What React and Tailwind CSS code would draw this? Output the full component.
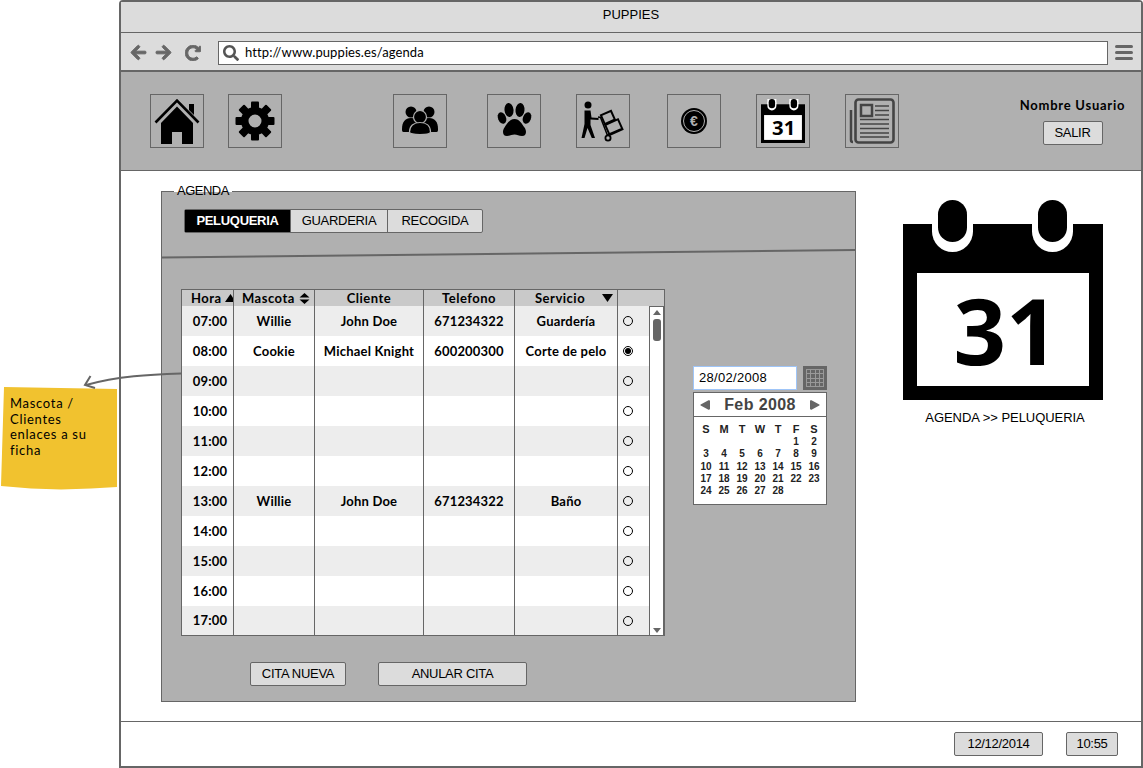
import React from "react";
import { FaArrowLeft, FaArrowRight, FaRedoAlt, FaSearch, FaCaretLeft, FaCaretRight } from "react-icons/fa";

const rows = [
  ["07:00", "Willie", "John Doe", "671234322", "Guardería"],
  ["08:00", "Cookie", "Michael Knight", "600200300", "Corte de pelo"],
  ["09:00"], ["10:00"], ["11:00"], ["12:00"],
  ["13:00", "Willie", "John Doe", "671234322", "Baño"],
  ["14:00"], ["15:00"], ["16:00"], ["17:00"],
];
const widths = ["w-[52px]", "w-[81px]", "w-[109px]", "w-[91px]", "w-[103px]"];
const days = [
  ["", "", "", "", "", "1", "2"],
  ["3", "4", "5", "6", "7", "8", "9"],
  ["10", "11", "12", "13", "14", "15", "16"],
  ["17", "18", "19", "20", "21", "22", "23"],
  ["24", "25", "26", "27", "28", "", ""],
];

function CalendarIcon({ size }) {
  return (
    <svg width={size} height={size} viewBox="0 0 200 200" className="block">
      <rect x="0" y="24" width="200" height="176" fill="#000" />
      <rect x="14" y="73" width="172" height="113" fill="#fff" />
      <rect x="29" y="0" width="41" height="52" rx="20.5" fill="#fff" />
      <rect x="129" y="0" width="41" height="52" rx="20.5" fill="#fff" />
      <rect x="29" y="0" width="41" height="24" fill="#fff" />
      <rect x="129" y="0" width="41" height="24" fill="#fff" />
      <rect x="35" y="0" width="29" height="42" rx="14.5" fill="#000" />
      <rect x="135" y="0" width="29" height="42" rx="14.5" fill="#000" />
      <text x="103" y="165" textAnchor="middle" fontFamily="'Open Sans', sans-serif" fontWeight="700" fontSize="92" fill="#000">31</text>
    </svg>
  );
}

function HouseIcon() {
  return (
    <svg width="52" height="52" viewBox="0 0 52 52" className="block">
      <path d="M38 9h5v11l-5-5z" fill="#000" />
      <path d="M4.500 27.500 26 5.500l21.500 22" fill="none" stroke="#000" strokeWidth="2.600" />
      <path d="M10 28 26 11.500 42 28v21H31V37H21v12H10z" fill="#000" />
    </svg>
  );
}

function GearIcon() {
  const angles = [0, 45, 90, 135, 180, 225, 270, 315];
  return (
    <svg width="52" height="52" viewBox="0 0 52 52" className="block">
      <circle cx="26" cy="26" r="10.250" fill="none" stroke="#000" strokeWidth="7.500" />
      {angles.map((a) => (
        <rect key={a} x="22" y="6.500" width="8" height="7" rx="1" fill="#000" transform={`rotate(${a} 26 26)`} />
      ))}
    </svg>
  );
}

function UsersIcon() {
  return (
    <svg width="52" height="52" viewBox="0 0 52 52" className="block" fill="#000" stroke="#b0b0b0" strokeWidth="0">
      <circle cx="17" cy="17" r="5.500" />
      <circle cx="35" cy="17" r="5.500" />
      <path d="M8 34c0-7 3-11 9-11s9 4 9 11v3H9.500C8 37 8 35.500 8 34z" />
      <path d="M44 34c0-7-3-11-9-11s-9 4-9 11v3h16.500c1.500 0 1.500-1.500 1.500-3z" />
      <circle cx="26" cy="22" r="6.500" stroke="#b0b0b0" strokeWidth="1.200" />
      <path d="M15.500 37c0-6 4-9.500 10.500-9.500S36.500 31 36.500 37c0 1.500-4 2.500-10.500 2.500S15.500 38.500 15.500 37z" stroke="#b0b0b0" strokeWidth="1.200" />
    </svg>
  );
}

function PawIcon() {
  return (
    <svg width="52" height="52" viewBox="0 0 52 52" className="block" fill="#000">
      <ellipse cx="14" cy="23" rx="4" ry="6" transform="rotate(-22 14 23)" />
      <ellipse cx="21" cy="15" rx="4.500" ry="7" transform="rotate(-6 21 15)" />
      <ellipse cx="32" cy="15" rx="4.500" ry="7" transform="rotate(6 32 15)" />
      <ellipse cx="39" cy="23" rx="4" ry="6" transform="rotate(22 39 23)" />
      <path d="M26.500 24c5 0 7.500 5 10 8.500 2.500 3.500 2 8.500-2.500 8.500-3 0-5-1.500-7.500-1.500S22 41 19 41c-4.500 0-5-5-2.500-8.500C19 29 21.500 24 26.500 24z" />
    </svg>
  );
}

function MoverIcon() {
  return (
    <svg width="52" height="52" viewBox="0 0 52 52" className="block">
      <circle cx="11" cy="10" r="3.500" fill="#000" />
      <path d="M7.500 15.500h6l1 7 7 .5v2l-8-.5V30l4.500 13h-3.200L10.500 33 7.500 43H4.500L7.500 29z" fill="#000" />
      <path d="M21 22l2.500.5 7 18" fill="none" stroke="#000" strokeWidth="1.500" />
      <circle cx="31" cy="43" r="2.600" fill="none" stroke="#000" strokeWidth="1.800" />
      <g transform="rotate(-24 35 28)" fill="none" stroke="#000" strokeWidth="2">
        <rect x="28" y="16.500" width="11" height="9.500" />
        <rect x="28" y="27" width="14" height="11" />
      </g>
      <path d="M30 40l14-6" stroke="#000" strokeWidth="1.500" />
    </svg>
  );
}

function EuroIcon() {
  return (
    <svg width="52" height="52" viewBox="0 0 52 52" className="block">
      <circle cx="26" cy="26" r="13" fill="#000" />
      <circle cx="26" cy="26" r="10.500" fill="none" stroke="#b0b0b0" strokeWidth="1" />
      <text x="26" y="31" textAnchor="middle" fontFamily="'Liberation Sans', sans-serif" fontWeight="700" fontSize="14" fill="#b0b0b0">€</text>
    </svg>
  );
}

function NewsIcon() {
  return (
    <svg width="52" height="52" viewBox="0 0 52 52" className="block" fill="none" stroke="#444">
      <path d="M5 15v30a2 2 0 0 0 2 2" strokeWidth="2.500" />
      <rect x="9.500" y="4.500" width="38" height="43" rx="3" strokeWidth="2.600" />
      <rect x="15" y="10" width="11" height="11" strokeWidth="2.500" />
      <path d="M29 11h14M29 15.500h14M29 20h14M14 24.500h29M14 29h29M14 33.500h29M14 38h29M14 42h29" strokeWidth="1.500" />
    </svg>
  );
}

function IconBox({ className, children }) {
  return (
    <div className={`flex h-[54px] w-[54px] shrink-0 items-center justify-center border border-[#666] ${className}`}>
      {children}
    </div>
  );
}

function Radio({ on }) {
  return (
    <span className="flex h-[10px] w-[10px] items-center justify-center rounded-full border border-black">
      {on && <span className="h-[6px] w-[6px] rounded-full bg-black" />}
    </span>
  );
}

function Btn({ className, children }) {
  return (
    <div className={`flex h-[24px] items-center justify-center rounded-[2px] border border-[#666] bg-[#dcdcdc] font-['Liberation_Sans',sans-serif] text-[13px] tracking-[-0.3px] text-black ${className}`}>
      {children}
    </div>
  );
}

export default function App() {
  return (
    <div className="relative h-[768px] w-[1143px] overflow-hidden bg-white font-['Lato',sans-serif] text-black">
      <div className="ml-[119px] flex h-[768px] w-[1024px] flex-col rounded-tl-[4px] rounded-tr-[4px] border-2 border-[#666]">
        {/* title */}
        <div className="flex h-[31px] items-start justify-center border-b border-[#666] bg-[#dcdcdc] pt-[3px] font-['Liberation_Sans',sans-serif] text-[13px]">
          PUPPIES
        </div>
        {/* address */}
        <div className="flex h-[39px] items-center border-b-2 border-[#666] bg-[#dcdcdc] pt-[2px] pl-[9px]">
          <FaArrowLeft className="h-[17px] w-[17px] text-[#666]" stroke="currentColor" strokeWidth={30} />
          <FaArrowRight className="ml-[8px] h-[17px] w-[17px] text-[#666]" stroke="currentColor" strokeWidth={30} />
          <FaRedoAlt className="ml-[13px] h-[16px] w-[16px] text-[#666]" stroke="currentColor" strokeWidth={30} />
          <div className="ml-[17px] flex h-[24px] w-[890px] items-center border border-[#666] bg-white pl-[4px] text-[13px] tracking-[0.1px]">
            <FaSearch className="h-[16px] w-[16px] text-[#555]" />
            <span className="ml-[6px]">http://www.puppies.es/agenda</span>
          </div>
          <div className="ml-[7px] flex w-[18px] flex-col gap-[3px]">
            <span className="h-[3px] rounded-[2px] bg-[#666]" />
            <span className="h-[3px] rounded-[2px] bg-[#666]" />
            <span className="h-[3px] rounded-[2px] bg-[#666]" />
          </div>
        </div>
        {/* toolbar */}
        <div className="flex h-[99px] border-b border-[#666] bg-[#b0b0b0] pt-[22px] pl-[29px]">
          <IconBox><HouseIcon /></IconBox>
          <IconBox className="ml-[24px]"><GearIcon /></IconBox>
          <IconBox className="ml-[111px]"><UsersIcon /></IconBox>
          <IconBox className="ml-[40px]"><PawIcon /></IconBox>
          <IconBox className="ml-[35px]"><MoverIcon /></IconBox>
          <IconBox className="ml-[37px]"><EuroIcon /></IconBox>
          <IconBox className="ml-[35px]"><CalendarIcon size={44} /></IconBox>
          <IconBox className="ml-[35px]"><NewsIcon /></IconBox>
          <div className="ml-[120px] flex w-[107px] flex-col items-center pt-[2px]">
            <div className="text-[13px] font-bold whitespace-nowrap tracking-[0.75px]">Nombre Usuario</div>
            <Btn className="mt-[5px] w-[60px]">SALIR</Btn>
          </div>
        </div>
        {/* main */}
        <div className="flex h-[551px] border-b border-[#666] pt-[20px] pl-[40px]">
          <div className="relative h-[511px] w-[695px] shrink-0 border border-[#666] bg-[#b0b0b0]">
            <div className="absolute -top-[9px] left-[12px] bg-[linear-gradient(white_0_9px,transparent_9px)] px-[3px] font-['Liberation_Sans',sans-serif] text-[13px] leading-[15px] tracking-[-0.5px]">AGENDA</div>
            {/* tabs */}
            <div className="ml-[22px] mt-[17px] flex h-[24px] w-[299px] rounded-[2px] border border-[#666] bg-[#dcdcdc] font-['Liberation_Sans',sans-serif] text-[13px] tracking-[-0.3px]">
              <div className="flex w-[105px] items-center justify-center bg-black font-bold text-white">PELUQUERIA</div>
              <div className="flex w-[98px] items-center justify-center border-x border-[#666]">GUARDERIA</div>
              <div className="flex flex-1 items-center justify-center">RECOGIDA</div>
            </div>
            <svg width="693" height="10" className="mt-[16px] block">
              <line x1="0" y1="8.500" x2="693" y2="1" stroke="#666" strokeWidth="2" />
            </svg>
            <div className="ml-[19px] mt-[30px] flex items-start">
              {/* table */}
              <div className="w-[484px] shrink-0 border border-[#666] bg-white text-[13px] font-bold tracking-[0.2px]">
                <div className="flex h-[16px] bg-[#c9c9c9] leading-[16px] tracking-[0.5px]">
                  <div className={`${widths[0]} flex items-center gap-[3px] border-r border-[#666] pl-[9px]`}>
                    Hora
                    <svg width="11" height="8"><path d="M5.500 0 11 8H0z" fill="#000" /></svg>
                  </div>
                  <div className={`${widths[1]} flex items-center gap-[4px] border-r border-[#666] pl-[8px]`}>
                    Mascota
                    <svg width="11" height="11"><path d="M5.500 0 10.500 4.500H.500zM.500 6.500h10L5.500 11z" fill="#000" /></svg>
                  </div>
                  <div className={`${widths[2]} border-r border-[#666] text-center`}>Cliente</div>
                  <div className={`${widths[3]} border-r border-[#666] text-center`}>Telefono</div>
                  <div className={`${widths[4]} flex items-center border-r border-[#666] pl-[20px]`}>
                    Servicio
                    <svg width="11" height="8" className="ml-[17px]"><path d="M0 0h11L5.500 8z" fill="#000" /></svg>
                  </div>
                </div>
                <div className="flex">
                  <div className="flex-1">
                    {rows.map((r, i) => (
                      <div key={r[0]} className={`flex ${i === 10 ? "h-[29px]" : "h-[30px]"} ${i % 2 === 0 ? "bg-[#ededed]" : "bg-white"}`}>
                        {widths.map((w, c) => (
                          <div key={w} className={`${w} flex items-center justify-center border-r border-[#666] pt-[1px] ${c === 0 ? "pl-[5px]" : ""}`}>
                            {r[c] || ""}
                          </div>
                        ))}
                        <div className="flex flex-1 items-center pl-[5px]">
                          <Radio on={i === 1} />
                        </div>
                      </div>
                    ))}
                  </div>
                  <div className="flex w-[15px] flex-col items-center border-x border-t border-[#666] bg-white pt-[3px]">
                    <svg width="8" height="5"><path d="M4 0l4 5H0z" fill="#666" /></svg>
                    <div className="mt-[4px] h-[22px] w-[8px] rounded-[3px] bg-[#666]" />
                    <svg width="8" height="5" className="mt-auto mb-[2px]"><path d="M0 0h8L4 5z" fill="#666" /></svg>
                  </div>
                </div>
              </div>
              {/* date picker */}
              <div className="ml-[28px] mt-[77px] w-[134px] shrink-0 font-['Liberation_Sans',sans-serif]">
                <div className="flex items-stretch justify-between">
                  <div className="flex h-[24px] w-[104px] items-center border border-[#9fc5f8] bg-white pl-[5px] text-[13px] tracking-[0.3px]">28/02/2008</div>
                  <div className="grid h-[24px] w-[24px] grid-cols-4 gap-[1px] border-[3px] border-[#666] bg-[#999] p-[1px]">
                    {Array.from({ length: 16 }).map((_, i) => (
                      <span key={i} className="bg-[#666]" />
                    ))}
                  </div>
                </div>
                <div className="mt-[2px] h-[113px] border border-[#666] bg-white">
                  <div className="flex h-[24px] items-center justify-between border-b border-[#666] px-[5px] text-[#444]">
                    <FaCaretLeft className="h-[16px] w-[11px] text-[#666]" preserveAspectRatio="none" />
                    <span className="text-[16px] font-bold tracking-[0.4px]">Feb 2008</span>
                    <FaCaretRight className="h-[16px] w-[11px] text-[#666]" preserveAspectRatio="none" />
                  </div>
                  <div className="px-[3px] pt-[5px] font-bold text-[#222]">
                    <div className="grid h-[14px] grid-cols-7 text-center text-[11px] leading-[14px]">
                      {["S", "M", "T", "W", "T", "F", "S"].map((d, i) => <span key={i}>{d}</span>)}
                    </div>
                    {days.map((w, i) => (
                      <div key={i} className="grid h-[12.300px] grid-cols-7 text-center text-[10px] leading-[12px]">
                        {w.map((d, j) => <span key={j}>{d}</span>)}
                      </div>
                    ))}
                  </div>
                </div>
              </div>
            </div>
            <div className="ml-[88px] mt-[26px] flex">
              <Btn className="w-[96px]">CITA NUEVA</Btn>
              <Btn className="ml-[32px] w-[149px]">ANULAR CITA</Btn>
            </div>
          </div>
          <div className="ml-[47px] mt-[9px] flex w-[200px] shrink-0 flex-col items-center">
            <CalendarIcon size={200} />
            <div className="mt-[8px] pl-[4px] font-['Liberation_Sans',sans-serif] text-[13px] tracking-[-0.05px]">AGENDA &gt;&gt; PELUQUERIA</div>
          </div>
        </div>
        {/* footer */}
        <div className="flex flex-1 items-center pl-[833px]">
          <Btn className="w-[89px]">12/12/2014</Btn>
          <Btn className="ml-[23px] w-[52px]">10:55</Btn>
        </div>
      </div>
      {/* annotation */}
      <div className="absolute left-[1px] top-[387px] h-[103px] w-[117px] bg-[#f1c22f] pt-[9px] pl-[9px] text-[13px] leading-[15.500px] tracking-[0.7px] [clip-path:polygon(3px_0,116px_2px,116px_100px,90px_101.500px,60px_102.500px,30px_101.500px,0_99px)]">
        Mascota /<br />Clientes<br />enlaces a su<br />ficha
      </div>
      <svg width="200" height="30" className="absolute left-0 top-[365px]">
        <path d="M181 8.500C150 9.500 118 11 86 20" fill="none" stroke="#666" strokeWidth="2" />
        <path d="M90.500 11 85 20l10 3" fill="none" stroke="#666" strokeWidth="2" />
      </svg>
    </div>
  );
}
